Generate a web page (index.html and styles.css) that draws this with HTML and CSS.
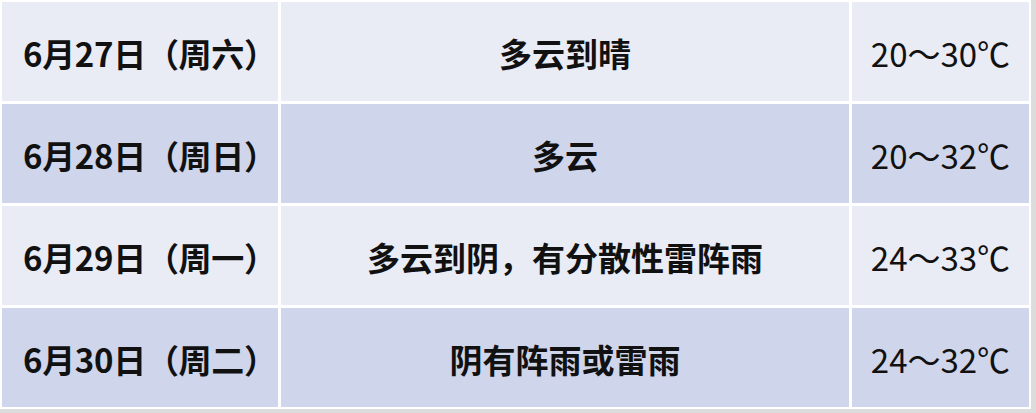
FILE: index.html
```html
<!DOCTYPE html>
<html lang="zh-CN">
<head>
<meta charset="utf-8">
<title>天气预报</title>
<link rel="stylesheet" href="styles.css">
</head>
<body>
<div class="table">
  <div class="cell light date">6月27日（周六）</div>
  <div class="cell light desc">多云到晴</div>
  <div class="cell light temp">20～30℃</div>

  <div class="cell dark date">6月28日（周日）</div>
  <div class="cell dark desc">多云</div>
  <div class="cell dark temp">20～32℃</div>

  <div class="cell light date">6月29日（周一）</div>
  <div class="cell light desc">多云到阴，有分散性雷阵雨</div>
  <div class="cell light temp">24～33℃</div>

  <div class="cell dark date">6月30日（周二）</div>
  <div class="cell dark desc">阴有阵雨或雷雨</div>
  <div class="cell dark temp">24～32℃</div>
</div>
</body>
</html>
```
FILE: styles.css
```css
html, body {
  margin: 0;
  padding: 0;
}
body {
  width: 1036px;
  height: 413px;
  background: #dcdcdc;
  font-family: "Noto Sans CJK SC", "Noto Sans", sans-serif;
  color: #111;
}
.table {
  width: 1031px;
  height: 409px;
  box-sizing: border-box;
  background: #ffffff;
  padding: 2px;
  display: grid;
  grid-template-columns: 276px 568px 1fr;
  grid-template-rows: repeat(4, 1fr);
  column-gap: 3px;
  row-gap: 3px;
}
.cell {
  display: flex;
  align-items: center;
  justify-content: center;
  font-size: 33px;
  line-height: 1;
  padding-top: 3px;
  box-sizing: border-box;
}
.light { background: #e9ebf5; }
.dark { background: #cfd5ea; }
.date {
  font-weight: 700;
  justify-content: flex-start;
  padding-left: 21px;
  letter-spacing: -0.3px;
}
.desc { font-weight: 700; }
.temp { font-weight: 400; }
```
